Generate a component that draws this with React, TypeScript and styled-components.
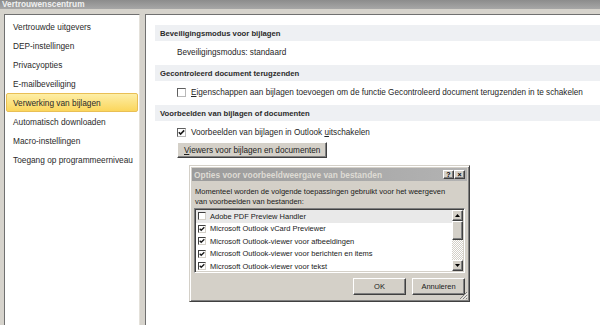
import React from 'react';
import styled, { createGlobalStyle, css } from 'styled-components';

const GlobalStyle = createGlobalStyle`
  html, body {
    margin: 0;
    padding: 0;
  }
  body {
    width: 600px;
    height: 325px;
    overflow: hidden;
    background: #d6d3cc;
    font-family: "Liberation Sans", Arial, sans-serif;
    color: #262626;
  }
`;

const raised = css`
  box-sizing: border-box;
  border: 1px solid;
  border-color: #ffffff #404040 #404040 #ffffff;
  box-shadow: inset -1px -1px #808080;
  background: #d4d0c8;
`;

const Window = styled.div`
  position: relative;
  width: 600px;
  height: 325px;
  display: flex;
  flex-direction: column;
  overflow: hidden;
  background: #d6d3cc;
`;

const TitleBar = styled.div`
  flex: none;
  height: 9px;
  padding-left: 2px;
  overflow: hidden;
  background: linear-gradient(#8c8c8c, #a7a7a7);
  color: #f0f0f0;
  font-weight: bold;
  font-size: 8.3px;
  line-height: 8.6px;
`;

const Frame = styled.div`
  flex: 1;
  min-height: 0;
  display: flex;
  gap: 5px;
  padding: 5px 0 0 4px;
`;

const NavPanel = styled.div`
  flex: none;
  width: 136px;
  box-sizing: border-box;
  padding-top: 2px;
  background: #ffffff;
  border: 1px solid;
  border-color: #707070 #e4e1da #e4e1da #707070;
  border-bottom: none;
`;

const NavItem = styled.div<{ $active?: boolean }>`
  height: 19px;
  box-sizing: border-box;
  margin: 0 1px;
  padding-left: 6px;
  display: flex;
  align-items: center;
  font-size: 8.3px;
  color: #2a2a2a;
  border: 1px solid transparent;
  border-radius: 2px;
  ${p =>
    p.$active &&
    css`
      background: linear-gradient(#fdeea6, #fbd65c);
      border-color: #e9bf55;
    `}
`;

const ContentPanel = styled.div`
  flex: 1;
  padding: 10px 0 0 9px;
  background: #ffffff;
  border-left: 1px solid #707070;
  border-top: 1px solid #707070;
`;

const SectionHeader = styled.div`
  height: 16px;
  padding-left: 5px;
  display: flex;
  align-items: center;
  background: #eef0f3;
  color: #2b2b2b;
  font-weight: bold;
  font-size: 7.7px;
`;

const SectionBody = styled.div`
  padding: 5px 0 7px 22px;
  display: flex;
  flex-direction: column;
  align-items: flex-start;
`;

const OptionRow = styled.div`
  height: 12px;
  display: flex;
  align-items: center;
  gap: 5px;
  font-size: 8.2px;
  color: #262626;
  white-space: nowrap;
`;

const U = styled.span`
  text-decoration: underline;
`;

const MainCheck = styled.span`
  width: 9px;
  height: 9px;
  box-sizing: border-box;
  display: inline-flex;
  align-items: center;
  justify-content: center;
  background: #ffffff;
  border: 1px solid;
  border-color: #5f5f5f #b8b8b8 #b8b8b8 #5f5f5f;
`;

const PushButton = styled.button`
  ${raised};
  height: 16px;
  margin-top: 4px;
  padding: 0 6px;
  font-family: inherit;
  font-size: 8.2px;
  color: #222222;
`;

const Dialog = styled.div`
  position: absolute;
  left: 189px;
  top: 165px;
  width: 281px;
  height: 137px;
  box-sizing: border-box;
  padding: 2px;
  display: flex;
  flex-direction: column;
  background: #d4d0c8;
  border: 1px solid;
  border-color: #d4d0c8 #404040 #404040 #d4d0c8;
  box-shadow: inset 1px 1px #ffffff, inset -1px -1px #808080;
  font-size: 7.5px;
  color: #1a1a1a;
`;

const DialogTitle = styled.div`
  flex: none;
  height: 13px;
  padding: 0 2px 0 2px;
  display: flex;
  align-items: center;
  justify-content: space-between;
  background: linear-gradient(90deg, #9b9b9b, #b3b3b3);
  color: #dedbd4;
  font-weight: bold;
  font-size: 8.4px;
  white-space: nowrap;
`;

const CaptionButtons = styled.div`
  display: flex;
`;

const CaptionButton = styled.span`
  ${raised};
  width: 11px;
  height: 9px;
  display: flex;
  align-items: center;
  justify-content: center;
  color: #000000;
  font-size: 7px;
  font-weight: bold;
  line-height: 1;
`;

const DialogBody = styled.div`
  flex: 1;
  padding: 6px 2px 2px 2px;
  display: flex;
  flex-direction: column;
`;

const Intro = styled.div`
  padding-left: 1px;
  line-height: 10px;
`;

const ListBox = styled.div`
  height: 65px;
  margin-top: 1px;
  box-sizing: border-box;
  padding: 1px;
  display: flex;
  background: #ffffff;
  border: 1px solid;
  border-color: #808080 #ffffff #ffffff #808080;
  box-shadow: inset 1px 1px #404040, inset -1px -1px #d4d0c8;
`;

const ListItems = styled.div`
  flex: 1;
  overflow: hidden;
`;

const ListRow = styled.div<{ $focused?: boolean }>`
  height: 12.5px;
  padding-left: 2px;
  display: flex;
  align-items: center;
  gap: 4px;
  white-space: nowrap;
  background: ${p => (p.$focused ? '#e9e9e9' : 'transparent')};
`;

const ClassicCheck = styled.span`
  width: 8px;
  height: 8px;
  box-sizing: border-box;
  flex: none;
  display: inline-flex;
  align-items: center;
  justify-content: center;
  background: #ffffff;
  border: 1px solid;
  border-color: #404040 #d4d0c8 #d4d0c8 #404040;
`;

const ScrollBar = styled.div`
  flex: none;
  width: 11px;
  display: flex;
  flex-direction: column;
`;

const ScrollArrow = styled.span`
  ${raised};
  height: 11px;
  display: flex;
  align-items: center;
  justify-content: center;
`;

const ScrollThumb = styled.span`
  ${raised};
  height: 19px;
`;

const ScrollTrack = styled.span`
  flex: 1;
  background: repeating-conic-gradient(#d4d0c8 0 25%, #ffffff 0 50%) 0 0 / 2px 2px;
`;

const ButtonRow = styled.div`
  margin-top: 5px;
  display: flex;
  justify-content: flex-end;
  gap: 6px;
`;

const DialogButton = styled.button`
  ${raised};
  width: 53px;
  height: 17px;
  padding: 0;
  font-family: inherit;
  font-size: 7.5px;
  color: #1a1a1a;
`;

const Grip = styled.svg`
  position: absolute;
  right: 1px;
  bottom: 1px;
`;

const CheckMark = ({ size = 7 }: { size?: number }) => (
  <svg width={size} height={size} viewBox="0 0 7 7">
    <path d="M0.8 3.2 L2.6 5 L6.2 1.4" fill="none" stroke="#1c1c1c" strokeWidth="1.6" />
  </svg>
);

const Arrow = ({ down }: { down?: boolean }) => (
  <svg width="5" height="3" viewBox="0 0 5 3">
    <polygon points={down ? '0,0 5,0 2.5,3' : '0,3 5,3 2.5,0'} fill="#000" />
  </svg>
);

const navItems = [
  'Vertrouwde uitgevers',
  'DEP-instellingen',
  'Privacyopties',
  'E-mailbeveiliging',
  'Verwerking van bijlagen',
  'Automatisch downloaden',
  'Macro-instellingen',
  'Toegang op programmeerniveau',
];

const previewers = [
  { name: 'Adobe PDF Preview Handler', on: false },
  { name: 'Microsoft Outlook vCard Previewer', on: true },
  { name: 'Microsoft Outlook-viewer voor afbeeldingen', on: true },
  { name: 'Microsoft Outlook-viewer voor berichten en items', on: true },
  { name: 'Microsoft Outlook-viewer voor tekst', on: true },
];

export default function App() {
  return (
    <>
      <GlobalStyle />
      <Window>
        <TitleBar>Vertrouwenscentrum</TitleBar>
        <Frame>
          <NavPanel>
            {navItems.map(item => (
              <NavItem key={item} $active={item === 'Verwerking van bijlagen'}>
                {item}
              </NavItem>
            ))}
          </NavPanel>
          <ContentPanel>
            <SectionHeader>Beveiligingsmodus voor bijlagen</SectionHeader>
            <SectionBody>
              <OptionRow>Beveiligingsmodus: standaard</OptionRow>
            </SectionBody>

            <SectionHeader>Gecontroleerd document terugzenden</SectionHeader>
            <SectionBody>
              <OptionRow>
                <MainCheck />
                <span>
                  <U>E</U>igenschappen aan bijlagen toevoegen om de functie Gecontroleerd document
                  terugzenden in te schakelen
                </span>
              </OptionRow>
            </SectionBody>

            <SectionHeader>Voorbeelden van bijlagen of documenten</SectionHeader>
            <SectionBody>
              <OptionRow>
                <MainCheck>
                  <CheckMark />
                </MainCheck>
                <span>
                  Voorbeelden van bijlagen in Outlook <U>u</U>itschakelen
                </span>
              </OptionRow>
              <PushButton>
                <U>V</U>iewers voor bijlagen en documenten
              </PushButton>
            </SectionBody>
          </ContentPanel>
        </Frame>

        <Dialog>
          <DialogTitle>
            <span>Opties voor voorbeeldweergave van bestanden</span>
            <CaptionButtons>
              <CaptionButton>?</CaptionButton>
              <CaptionButton>×</CaptionButton>
            </CaptionButtons>
          </DialogTitle>
          <DialogBody>
            <Intro>
              Momenteel worden de volgende toepassingen gebruikt voor het weergeven
              <br />
              van voorbeelden van bestanden:
            </Intro>
            <ListBox>
              <ListItems>
                {previewers.map((p, i) => (
                  <ListRow key={p.name} $focused={i === 0}>
                    <ClassicCheck>{p.on && <CheckMark size={6} />}</ClassicCheck>
                    <span>{p.name}</span>
                  </ListRow>
                ))}
              </ListItems>
              <ScrollBar>
                <ScrollArrow>
                  <Arrow />
                </ScrollArrow>
                <ScrollThumb />
                <ScrollTrack />
                <ScrollArrow>
                  <Arrow down />
                </ScrollArrow>
              </ScrollBar>
            </ListBox>
            <ButtonRow>
              <DialogButton>OK</DialogButton>
              <DialogButton>Annuleren</DialogButton>
            </ButtonRow>
          </DialogBody>
          <Grip width="9" height="9" viewBox="0 0 9 9">
            <path d="M8 1 L1 8 M8 4 L4 8 M8 7 L7 8" stroke="#808080" strokeWidth="1" />
            <path d="M8.8 1.8 L1.8 8.8 M8.8 4.8 L4.8 8.8" stroke="#ffffff" strokeWidth="0.8" />
          </Grip>
        </Dialog>
      </Window>
    </>
  );
}
